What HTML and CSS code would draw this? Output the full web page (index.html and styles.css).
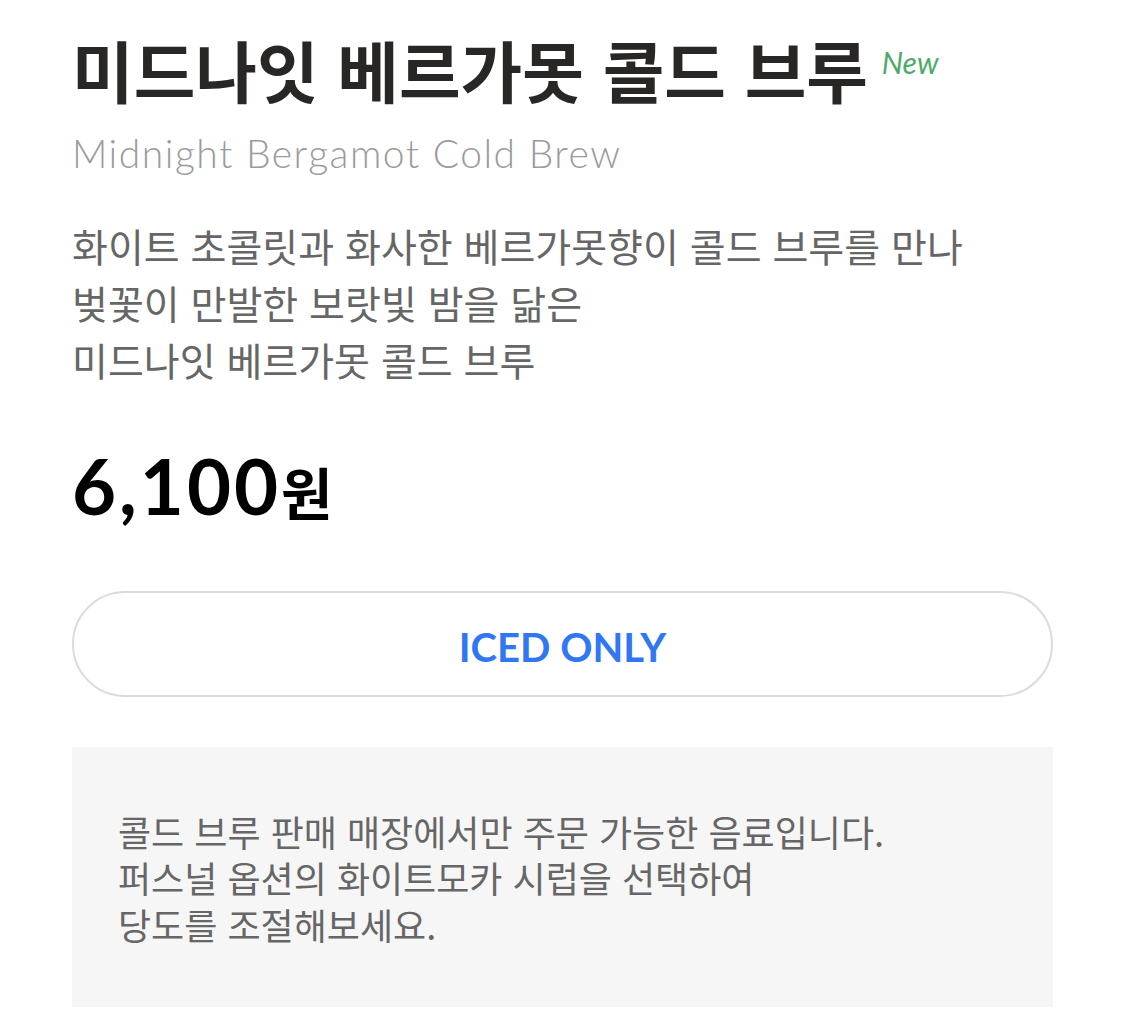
FILE: index.html
```html
<!DOCTYPE html>
<html lang="ko">
<head>
    <meta charset="UTF-8">
    <meta name="viewport" content="width=device-width, initial-scale=1.0">
    <title>미드나잇 베르가못 콜드 브루</title>
    <link rel="stylesheet" href="styles.css">
</head>
<body>
    <div class="container">
        <div class="header">
            <h1 class="title">미드나잇 베르가못 콜드 브루 <span class="badge-new">New</span></h1>
            <p class="subtitle">Midnight Bergamot Cold Brew</p>
        </div>

        <p class="description">
            화이트 초콜릿과 화사한 베르가못향이 콜드 브루를 만나<br>
            벚꽃이 만발한 보랏빛 밤을 닮은<br>
            미드나잇 베르가못 콜드 브루
        </p>

        <div class="price">6,100<span class="price-unit">원</span></div>

        <div class="temp-option">ICED ONLY</div>

        <div class="notice">
            <p>
                콜드 브루 판매 매장에서만 주문 가능한 음료입니다.<br>
                퍼스널 옵션의 화이트모카 시럽을 선택하여<br>
                당도를 조절해보세요.
            </p>
        </div>
    </div>
</body>
</html>
```

FILE: styles.css
```css
:root {
    --text: #292725;
    --text-sub: #9b9b9b;
    --text-body: #666666;
    --green: #4caa6b;
    --blue: #3176f3;
    --border: #dcdcdc;
    --bg-gray: #f6f6f6;
}

* {
    margin: 0;
    padding: 0;
    box-sizing: border-box;
}

body {
    font-family: 'Noto Sans CJK KR', 'Noto Sans', sans-serif;
    background: #ffffff;
    color: var(--text);
}

.container {
    width: 981px;
    margin-left: 72px;
    padding-top: 17px;
}

.title {
    font-size: 67px;
    font-weight: 700;
    line-height: 90px;
    color: var(--text);
}

.badge-new {
    margin-left: -5px;
    font-family: Lato, sans-serif;
    font-style: italic;
    font-weight: 400;
    font-size: 30px;
    color: var(--green);
    vertical-align: 24px;
}

.subtitle {
    font-family: Lato, sans-serif;
    font-weight: 300;
    font-size: 39px;
    line-height: 1.2;
    letter-spacing: 1.5px;
    color: var(--text-sub);
    margin-top: 16px;
}

.description {
    font-size: 39px;
    line-height: 57px;
    color: var(--text-body);
    margin-top: 40px;
}

.price {
    font-family: Lato, 'Noto Sans CJK KR', sans-serif;
    font-size: 76px;
    font-weight: 700;
    line-height: 1.2;
    letter-spacing: 3px;
    color: #000000;
    margin-top: 52px;
}

.price-unit {
    font-family: 'Noto Sans CJK KR', sans-serif;
    font-size: 56px;
    letter-spacing: 0;
}

.temp-option {
    margin-top: 60px;
    height: 106px;
    padding-top: 6px;
    border: 2px solid var(--border);
    border-radius: 53px;
    display: flex;
    align-items: center;
    justify-content: center;
    font-family: Lato, sans-serif;
    font-size: 40px;
    font-weight: 700;
    color: var(--blue);
}

.notice {
    margin-top: 50px;
    background: var(--bg-gray);
    padding: 61px 46px 60px;
}

.notice p {
    font-size: 36px;
    line-height: 46.5px;
    color: var(--text-body);
}
```
